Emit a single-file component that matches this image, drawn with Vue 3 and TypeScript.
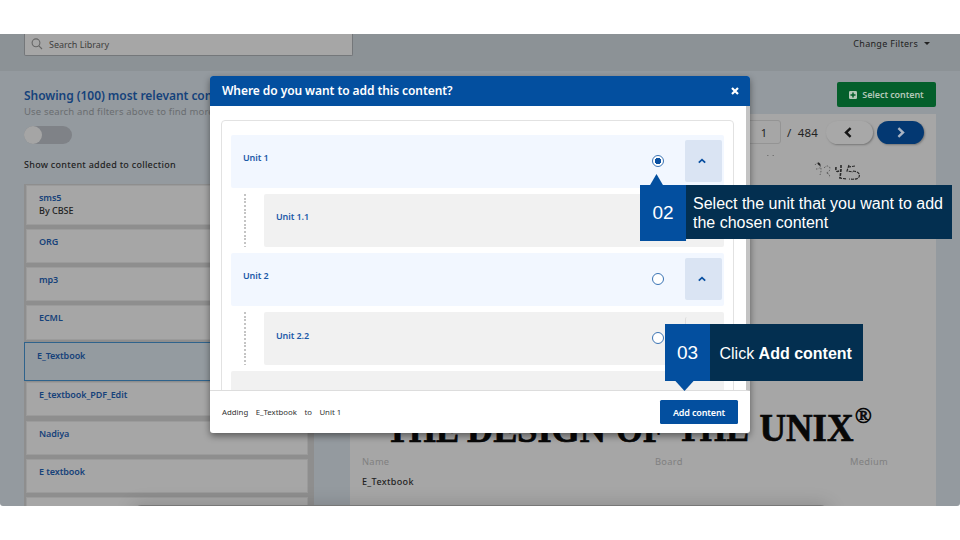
<script setup lang="ts">
interface Item { title: string; by?: string; kind?: string }
const items: Item[] = [
  { title: 'sms5', by: 'By CBSE', kind: 'tall' },
  { title: 'ORG' },
  { title: 'mp3' },
  { title: 'ECML', kind: 'before' },
  { title: 'E_Textbook', kind: 'active' },
  { title: 'E_textbook_PDF_Edit' },
  { title: 'Nadiya' },
  { title: 'E textbook' },
  { title: 'pdf' },
]
interface Unit { title: string; child: boolean; selected: boolean }
const units: Unit[] = [
  { title: 'Unit 1', child: false, selected: true },
  { title: 'Unit 1.1', child: true, selected: false },
  { title: 'Unit 2', child: false, selected: false },
  { title: 'Unit 2.2', child: true, selected: false },
]
</script>

<template>
  <div class="slide">
    <div class="screen">
      <header class="topbar">
        <div class="search">
          <svg width="12" height="12" viewBox="0 0 12 12"><circle cx="5" cy="4.8" r="3.9" /><path d="M7.9 7.8 11 11" /></svg>
          <span>Search Library</span>
        </div>
        <div class="filters"><span>Change Filters</span><i class="caret"></i></div>
      </header>
      <main class="main">
        <section class="left">
          <h2>Showing (100) most relevant contents</h2>
          <p class="hint">Use search and filters above to find more content</p>
          <div class="switch"><i></i></div>
          <p class="added">Show content added to collection</p>
          <div class="list">
            <div v-for="it in items" :key="it.title" class="card" :class="it.kind">
              <b>{{ it.title }}</b>
              <span v-if="it.by">{{ it.by }}</span>
            </div>
          </div>
        </section>
        <section class="right">
          <button class="select">
            <svg width="8" height="8" viewBox="0 0 8 8"><rect width="8" height="8" rx="1.3" fill="#b4c8b8" /><path d="M4 1.5v5M1.5 4h5" stroke="#045f2b" stroke-width="1.5" /></svg>
            <span>Select content</span>
          </button>
          <div class="preview">
            <div class="pager">
              <span class="page">1</span>
              <span class="total">/&nbsp; 484</span>
              <span class="nav"><svg width="8" height="11" viewBox="0 0 8 11"><path d="M6.6 1.2 2 5.5l4.6 4.3" stroke="#161616" /></svg></span>
              <span class="nav next"><svg width="8" height="11" viewBox="0 0 8 11"><path d="M1.4 1.2 6 5.5 1.4 9.8" stroke="#a9b4c4" /></svg></span>
            </div>
            <svg class="scan" width="586" height="306" viewBox="350 146 586 306">
              <g fill="none" stroke="#292929" stroke-width="1">
                <path stroke-dasharray="1.500 1.500" stroke="#555" d="M815 165q3-4 5 0q1 4-4 4M820 165q2 5 0 10M824 168q4-4 6 0q0 4-4 5q5 1 3 5" />
                <path stroke="#222" d="M818 163l2 2" stroke-width="1.800" />
                <path stroke-dasharray="3 1" d="M836 167q-1 7 5 3M841 165v5l-1 8" stroke-width="1.600" />
                <path stroke-dasharray="3 1" d="M839 178l8 1M849 165l-2 6 6 1M855 166l-6 1M853 171q8 1 6 6q-2 3-10 2" stroke-width="1.200" />
                <path stroke="#777" stroke-dasharray="1.5 4" d="M767 155.500h9" />
              </g>
              <g class="title">
                <text x="386" y="441.500" textLength="73" lengthAdjust="spacingAndGlyphs">THE</text>
                <text x="467" y="441.500" textLength="139" lengthAdjust="spacingAndGlyphs">DESIGN</text>
                <text x="616" y="441.500" textLength="48" lengthAdjust="spacingAndGlyphs">OF</text>
                <text x="677" y="441" textLength="72" lengthAdjust="spacingAndGlyphs">THE</text>
                <text x="759.500" y="440.500" textLength="94" lengthAdjust="spacingAndGlyphs" class="unix">UNIX</text>
                <text x="855" y="422.500" class="reg">®</text>
              </g>
            </svg>
            <div class="meta">
              <div class="name"><label>Name</label><span>E_Textbook</span></div>
              <div class="board"><label>Board</label></div>
              <div><label>Medium</label></div>
            </div>
          </div>
        </section>
      </main>
      <div class="dock"></div>
    </div>

    <div class="modal">
      <div class="mhead">
        <h3>Where do you want to add this content?</h3>
        <svg width="8" height="8" viewBox="0 0 8 8"><path d="m1 1 6 6M7 1 1 7" stroke="#fff" stroke-width="2.2" /></svg>
      </div>
      <div class="mbody">
        <div class="tree">
          <div v-for="u in units" :key="u.title" class="unit" :class="{ child: u.child }">
            <div class="row">
              <b>{{ u.title }}</b>
              <i class="radio" :class="{ on: u.selected }"></i>
              <i class="toggle"><svg v-if="!u.child" width="8" height="6" viewBox="0 0 8 6"><path d="M.8 4.700 4 1.700l3.200 3" fill="none" stroke="#0a50a1" stroke-width="1.800" /></svg></i>
            </div>
          </div>
          <div class="unit"><div class="row rest"></div></div>
        </div>
      </div>
      <div class="mfoot">
        <p><span>Adding</span><span>E_Textbook</span><span>to</span><span>Unit 1</span></p>
        <button>Add content</button>
      </div>
    </div>

    <div class="callout two">
      <span class="num">02</span>
      <p>Select the unit that you want to add<br />the chosen content</p>
    </div>
    <div class="callout three">
      <span class="num">03</span>
      <p>Click <strong>Add content</strong></p>
    </div>
  </div>
</template>

<style>
body { margin: 0; background: #fff; overflow: hidden; }
</style>

<style scoped>
* { box-sizing: border-box; }
h2, h3, p { margin: 0; }
button { border: 0; font: inherit; padding: 0; }
i { font-style: normal; }
.slide { position: relative; width: 960px; height: 540px; padding-top: 34px; background: #fff; overflow: hidden; font-family: "Noto Sans", "Open Sans", sans-serif; font-size: 9px; color: #222; }
.screen { position: relative; height: 472px; overflow: hidden; background: #949a9f; border-radius: 0 0 3px 3px; }
.topbar { height: 37px; background: #8c9296; display: flex; justify-content: space-between; padding: 0 30px 0 24px; }
.search { width: 329px; height: 22px; border: 1px solid #74777a; border-top: 0; border-radius: 0 0 2px 2px; background: #a6a6a6; display: flex; align-items: center; gap: 6px; padding: 0 0 1px 6px; color: #3e3e3e; letter-spacing: -.02px; }
.search svg { fill: none; stroke: #666; stroke-width: 1.1; }
.filters { display: flex; height: 19px; align-items: center; gap: 6px; letter-spacing: .3px; }
.caret { border: 3px solid transparent; border-top: 3px solid #222; border-bottom: 0; }
.main { display: flex; justify-content: space-between; height: 435px; padding: 0 24px; }
.left { width: 290px; white-space: nowrap; }
.left h2 { margin-top: 17px; height: 16px; line-height: 16px; font-size: 12px; font-weight: 600; color: #14427b; letter-spacing: -.05px; overflow: hidden; }
.hint { height: 14px; line-height: 15px; font-size: 9.500px; color: #6a6d70; letter-spacing: .16px; overflow: hidden; }
.switch { width: 48px; height: 18px; margin-top: 8px; border-radius: 9px; background: #7f8287; }
.switch i { display: block; width: 18px; height: 18px; border-radius: 9px; background: #a5a5a5; }
.added { height: 14px; line-height: 14px; margin-top: 14px; font-weight: 500; letter-spacing: .27px; }
.list { margin-top: 11.500px; height: 324.500px; padding: 1.500px 6px 0 1.500px; background: #8e8e8e; overflow: hidden; }
.card { height: 34px; margin-bottom: 4.200px; padding: 5px 12.500px; background: #a6a6a6; border: 1px solid #9b9b9b; line-height: 13px; display: flex; flex-direction: column; font-weight: 500; }
.card b { font-weight: 600; letter-spacing: -.08px; color: #16427a; }
.card.tall { height: 40px; margin-bottom: 3.700px; }
.card.before { height: 35px; margin-bottom: 2px; }
.card.active { height: 38.500px; margin: 0 0 1.800px -1.500px; border: 1px solid #2f638c; background: #949ba0; padding: 5.500px 12px; }
.right { width: 586px; display: flex; flex-direction: column; }
.select { align-self: flex-end; width: 99px; height: 25px; margin-top: 11px; background: #045f2b; color: #b4c8b8; font-weight: 600; letter-spacing: -.1px; border-radius: 2px; display: flex; align-items: center; justify-content: center; gap: 5px; }
.preview { margin-top: 7px; height: 392px; background: #a6a6a6; }
.pager { display: flex; justify-content: flex-end; align-items: center; height: 32px; padding: 4px 12.500px 0 0; font-size: 11px; }
.page { width: 37px; height: 24px; border: 1px solid #949494; border-radius: 3px; display: grid; place-items: center; padding-left: 3px; }
.total { width: 44.500px; padding-left: 6px; white-space: nowrap; font-size: 11.500px; letter-spacing: .15px; }
.nav { width: 47px; height: 23px; border-radius: 12px; background: #a8a8a8; box-shadow: 1px 1px 2px #777; display: grid; place-items: center; }
.nav svg { fill: none; stroke-width: 2.400; margin-right: 2px; }
.next { margin-left: 4px; background: #033872; }
.next svg { margin: 0 0 0 1px; }
.scan { display: block; }
.title { font-family: "Liberation Serif", serif; font-weight: 700; font-size: 38px; fill: #080808; stroke: #080808; stroke-width: .7; }
.title .unix { font-size: 39px; }
.title .reg { font-size: 22px; font-weight: 400; }
.meta { display: flex; padding: 2.500px 48px 0 12px; }
.meta .name { width: 293px; }
.meta .board { width: 195px; }
.meta label { display: block; height: 14px; line-height: 14px; color: #808080; letter-spacing: .3px; font-size: 9.300px; }
.meta span { display: block; margin-top: 6px; line-height: 14px; font-weight: 500; letter-spacing: .35px; }
.dock { position: absolute; left: 132px; top: 471px; width: 698px; height: 20px; border-radius: 12px; box-shadow: 0 0 18px 1px rgba(0,0,0,.16); background: #777; }
.modal { position: absolute; left: 210px; top: 76px; width: 540px; height: 357px; border-radius: 3px; background: #fff; box-shadow: 0 3px 7px rgba(0,0,0,.45); overflow: hidden; }
.mhead { height: 30px; background: #034f9f; color: #fff; display: flex; justify-content: space-between; align-items: center; padding: 0 11px 0 12px; }
.mhead h3 { font-size: 12px; font-weight: 600; letter-spacing: -.07px; line-height: 16px; }
.mbody { height: 285px; overflow: hidden; padding: 14px 12px 0 11px; border-right: 4px solid #c3c3c3; border-bottom: 1px solid #ddd; }
.tree { width: 513px; height: 290px; border: 1px solid #e2e2e2; border-radius: 4px; padding: 13.500px 9px; }
.unit { margin-bottom: 6.200px; }
.row { height: 53px; border-radius: 2px; background: #f2f7ff; display: flex; padding: 5px 2.500px 5px 12px; }
.row b { flex: 1; margin-top: 11.500px; line-height: 13px; font-weight: 600; letter-spacing: -.1px; color: #1c5aa8; }
.child { padding-left: 13px; }
.child .row { margin-left: 20px; background: #f1f1f1; position: relative; }
.child { background: repeating-linear-gradient(#c4c4c4 0 2px, transparent 2px 3.700px) 13px 0 / 2px 100% no-repeat; }
.row.rest { background: #f1f1f1; }
.radio { width: 12px; height: 12px; margin: 15px 21px 0 0; border: 1px solid #3b74b4; border-radius: 50%; background: #fff; }
.radio.on { background: radial-gradient(circle, #0a50a1 0 3px, #fff 3.500px); }
.toggle { width: 36.500px; height: 42px; border-radius: 2px; background: #dae4f3; display: grid; place-items: center; }
.toggle svg { margin-right: 3px; }
.child .toggle { background: none; border-left: 1px solid #ddd; }
.mfoot { height: 42px; padding: 0 12px; display: flex; justify-content: space-between; align-items: center; }
.mfoot p { display: flex; gap: 7.500px; font-size: 7.800px; color: #333; }
.mfoot button { width: 78px; height: 24px; border-radius: 1.500px; background: #034f9f; color: #fff; font-weight: 600; letter-spacing: -.15px; }
.callout { position: absolute; display: flex; align-items: flex-start; font-family: "Liberation Sans", Arial, sans-serif; color: #fff; }
.num { display: grid; place-items: center; background: #034f9f; font-size: 19px; }
.callout p { background: #032f50; white-space: nowrap; }
.callout::before { content: ""; position: absolute; background: #034f9f; }
.two { left: 640px; top: 185px; }
.two .num { width: 46px; height: 56px; }
.two p { width: 266px; height: 54px; padding: 8.500px 7px; font-size: 16px; line-height: 19px; }
.two::before { left: 9.500px; top: -11px; width: 14px; height: 12px; clip-path: polygon(50% 0, 100% 100%, 0 100%); }
.three { left: 665px; top: 324px; }
.three .num { width: 45px; height: 57px; }
.three p { width: 153px; height: 57px; line-height: 59px; padding-left: 9.500px; font-size: 16px; }
.three::before { left: 9.500px; top: 56px; width: 20px; height: 11px; clip-path: polygon(0 0, 100% 0, 50% 100%); }
</style>
